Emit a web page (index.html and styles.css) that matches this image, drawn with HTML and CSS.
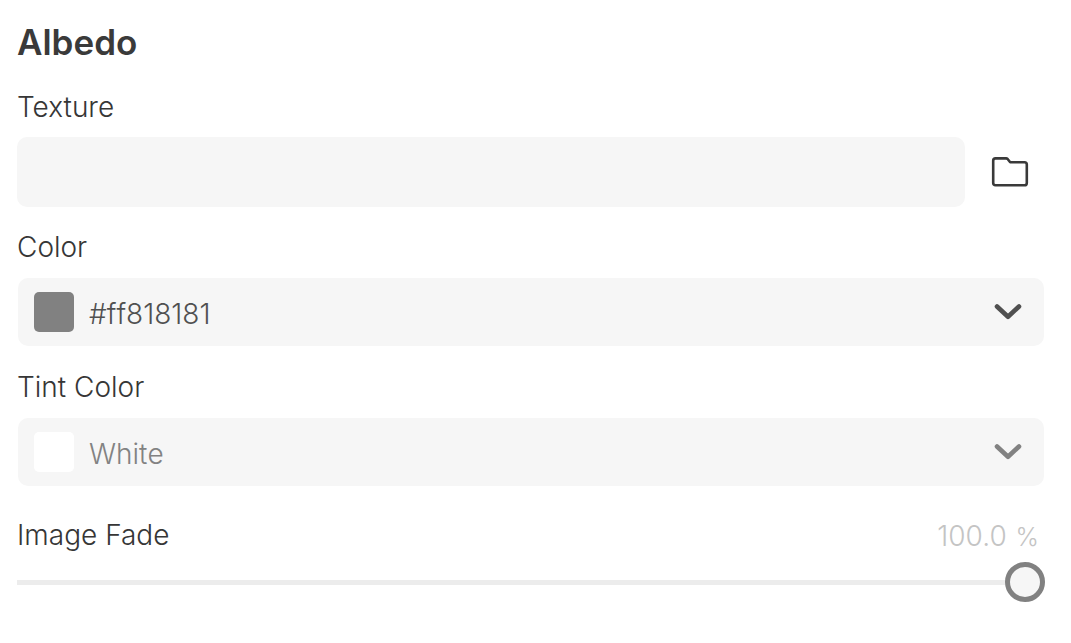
FILE: index.html
```html
<!DOCTYPE html>
<html lang="en">
<head>
<meta charset="utf-8">
<meta name="viewport" content="width=device-width, initial-scale=1">
<title>Albedo</title>
<link rel="stylesheet" href="styles.css">
</head>
<body>
<form class="panel">
  <h2 class="title">Albedo</h2>

  <div class="field">
    <label class="label" for="texture">Texture</label>
    <div class="file-row">
      <input class="text-box" id="texture" type="text">
      <button class="browse" type="button" aria-label="Browse">
        <svg width="38" height="32" viewBox="0 0 38 32" fill="none" stroke="#3a3a3a" stroke-width="2.6" stroke-linejoin="round">
          <path d="M4.5 2.4H15.2Q16 2.4 16.6 3L19.2 6.3H33.5Q35.8 6.3 35.8 8.6V26.9Q35.8 29.3 33.5 29.3H4.5Q2.2 29.3 2.2 26.9V4.7Q2.2 2.4 4.5 2.4Z"/>
        </svg>
      </button>
    </div>
  </div>

  <div class="field">
    <label class="label" for="color">Color</label>
    <div class="picker">
      <select class="select" id="color"><option>#ff818181</option></select>
      <span class="swatch swatch-gray"></span>
      <svg class="chevron" width="28" height="18" viewBox="0 0 28 18" fill="none" stroke="currentColor" stroke-width="4.6" stroke-linecap="round" stroke-linejoin="round"><path d="M3 3.5L14 13.8L25 3.5"/></svg>
    </div>
  </div>

  <div class="field">
    <label class="label" for="tint">Tint Color</label>
    <div class="picker picker-muted">
      <select class="select" id="tint"><option>White</option></select>
      <span class="swatch swatch-white"></span>
      <svg class="chevron" width="28" height="18" viewBox="0 0 28 18" fill="none" stroke="currentColor" stroke-width="4.6" stroke-linecap="round" stroke-linejoin="round"><path d="M3 3.5L14 13.8L25 3.5"/></svg>
    </div>
  </div>

  <div class="fade">
    <div class="fade-head">
      <label class="label" for="fade">Image Fade</label>
      <output class="value" for="fade">100.0 <span class="unit">%</span></output>
    </div>
    <input class="slider" id="fade" type="range" min="0" max="100" value="100">
  </div>
</form>
</body>
</html>
```
FILE: styles.css
```css
* {
  box-sizing: border-box;
}

body {
  margin: 0;
  background: #fff;
  color: #363636;
  font: 350 28px/36px Inter, "Liberation Sans", sans-serif;
}

.panel {
  display: flex;
  flex-direction: column;
  padding: 22px 26px 24px 17px;
}

.title {
  margin: 0 0 27px;
  color: #3a3a3a;
  font-size: 35px;
  line-height: 40px;
  font-weight: 600;
}

.field {
  display: flex;
  flex-direction: column;
  gap: 12px;
  margin-bottom: 22px;
}

.file-row {
  display: flex;
  align-items: center;
  gap: 10px;
}

.text-box {
  flex: 1;
  min-width: 0;
  height: 70px;
  padding: 0 16px;
  border: 0;
  border-radius: 10px;
  background: #f6f6f6;
  color: inherit;
  font: inherit;
}

.browse {
  display: grid;
  place-items: center;
  width: 70px;
  height: 68px;
  padding: 0;
  border: 0;
  background: none;
}

.picker {
  display: grid;
  align-items: center;
  margin: 1px;
  color: #505050;
}

.picker-muted {
  color: #828282;
}

.picker > * {
  grid-area: 1 / 1;
}

.select {
  appearance: none;
  width: 100%;
  height: 68px;
  padding: 4px 60px 0 71px;
  border: 0;
  border-radius: 10px;
  background: #f6f6f6;
  color: inherit;
  font: inherit;
  font-kerning: none;
  font-variant-ligatures: none;
}

.swatch {
  width: 40px;
  height: 40px;
  margin-left: 16px;
  border-radius: 5px;
  pointer-events: none;
}

.swatch-gray {
  background: #818181;
}

.swatch-white {
  background: #fff;
}

.chevron {
  justify-self: end;
  margin-right: 22px;
  pointer-events: none;
}

.fade {
  display: flex;
  flex-direction: column;
  gap: 7px;
  margin-top: 8px;
}

.fade-head {
  display: flex;
  justify-content: space-between;
}

.value {
  padding: 1px 6px 0 0;
  color: #c4c4c4;
}

.unit {
  margin-left: 1px;
  font-size: 25px;
  line-height: 25px;
}

.slider {
  appearance: none;
  width: 100%;
  height: 40px;
  margin: 1px 0 0;
  background: none;
}

.slider::-webkit-slider-runnable-track {
  height: 5px;
  background: #ececec;
}

.slider::-webkit-slider-thumb {
  appearance: none;
  width: 40px;
  height: 40px;
  margin-top: -18px;
  border: 5px solid #818181;
  border-radius: 50%;
  background: #f6f6f6;
}
```
